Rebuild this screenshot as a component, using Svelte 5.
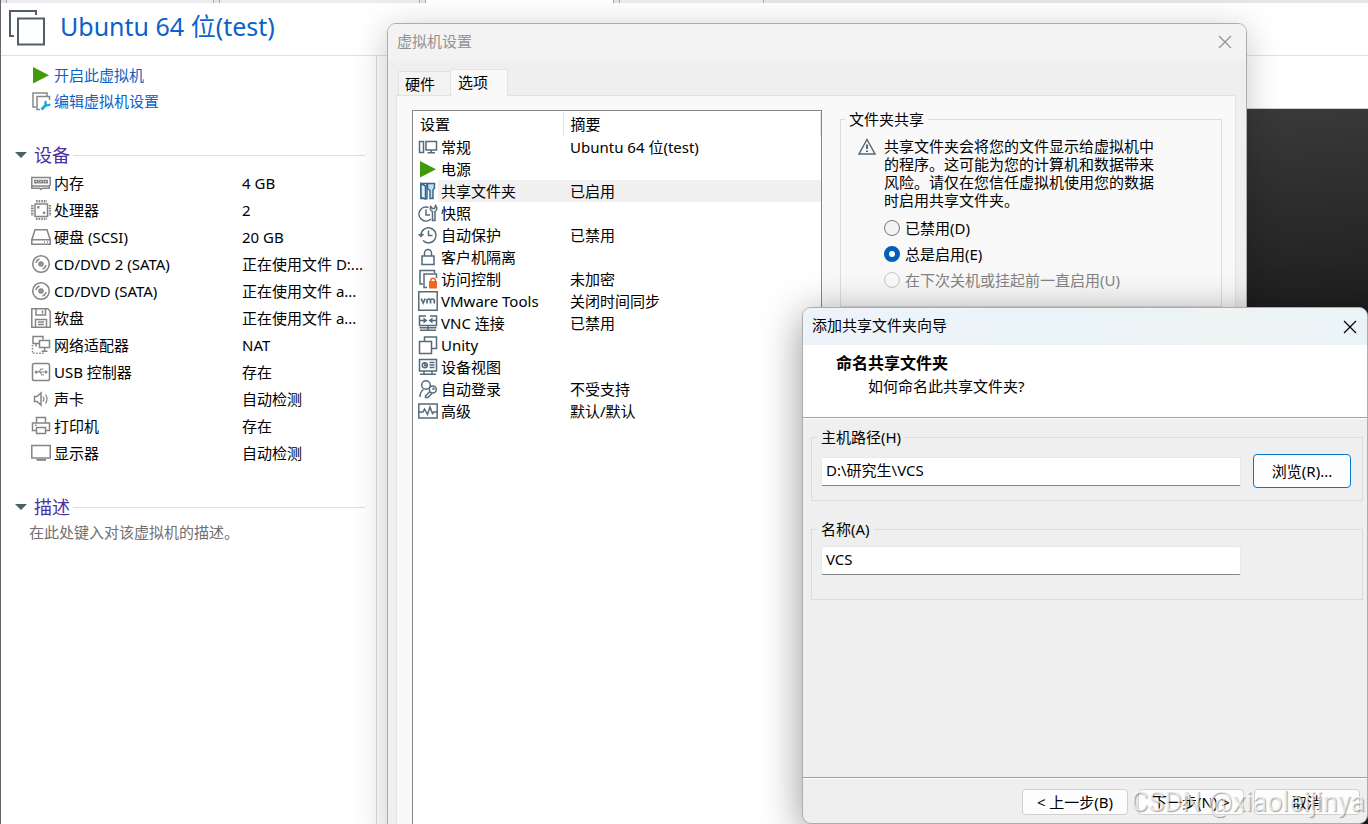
<script lang="ts">
  interface Row {
    icon: string;
    name: string;
    value: string;
  }

  const devices: Row[] = [
    { icon: "memory", name: "内存", value: "4 GB" },
    { icon: "cpu", name: "处理器", value: "2" },
    { icon: "disk", name: "硬盘 (SCSI)", value: "20 GB" },
    { icon: "cd", name: "CD/DVD 2 (SATA)", value: "正在使用文件 D:..." },
    { icon: "cd", name: "CD/DVD (SATA)", value: "正在使用文件 a..." },
    { icon: "floppy", name: "软盘", value: "正在使用文件 a..." },
    { icon: "network", name: "网络适配器", value: "NAT" },
    { icon: "usb", name: "USB 控制器", value: "存在" },
    { icon: "sound", name: "声卡", value: "自动检测" },
    { icon: "printer", name: "打印机", value: "存在" },
    { icon: "display", name: "显示器", value: "自动检测" },
  ];

  const settings: Row[] = [
    { icon: "general", name: "常规", value: "Ubuntu 64 位(test)" },
    { icon: "play", name: "电源", value: "" },
    { icon: "shared", name: "共享文件夹", value: "已启用" },
    { icon: "snapshot", name: "快照", value: "" },
    { icon: "history", name: "自动保护", value: "已禁用" },
    { icon: "lock", name: "客户机隔离", value: "" },
    { icon: "access", name: "访问控制", value: "未加密" },
    { icon: "vmtools", name: "VMware Tools", value: "关闭时间同步" },
    { icon: "vnc", name: "VNC 连接", value: "已禁用" },
    { icon: "unity", name: "Unity", value: "" },
    { icon: "view", name: "设备视图", value: "" },
    { icon: "login", name: "自动登录", value: "不受支持" },
    { icon: "advanced", name: "高级", value: "默认/默认" },
  ];

  const modes = [
    { id: "disabled", label: "已禁用(D)", off: false },
    { id: "always", label: "总是启用(E)", off: false },
    { id: "until", label: "在下次关机或挂起前一直启用(U)", off: true },
  ];

  // 20x20 icon bodies, stroked with the current colour
  const icons: Record<string, string> = {
    memory: `<path d="M.8 4.500h18.400v7.700l-1 .6v2.400h-7l-1.200 1.300-1.200-1.300H.8v-2.400z"/><path d="M1 13h18"/><path d="M3.700 7.500h3v2.300h-3zM8.500 7.500h3v2.300h-3zM13.300 7.500h3v2.300h-3z"/>`,
    cpu: `<path d="M4 4h12.500v12.500H4z"/><path stroke-width="2.600" stroke-dasharray="1.600 1" d="M5 1.300h11M5 19h11M1.300 5v11M19 5v11"/><circle cx="7.300" cy="7.300" r=".6"/><circle cx="13" cy="12.800" r=".6"/>`,
    disk: `<path d="M4 2.700h12l3.200 10v4.500H.8v-4.500zM1 12.700h18"/><path d="M13 15h1M16 15h1"/>`,
    cd: `<circle cx="10" cy="10" r="8.300"/><circle cx="10" cy="10" r="2"/><circle cx="10" cy="10" r=".4"/><path d="M5 9a5 5 0 0 1 3.500-4M15 11a5 5 0 0 1-3.500 4"/>`,
    floppy: `<path d="M.8.8h16l2.400 2.400v16H.8zM5 1v6h9.500V1M4.500 19v-7.500h11V19M11.500 2.500v3M7 14h6M7 16.500h6"/>`,
    network: `<path d="M8 8.500H2v-7h10v3M8.500 5.500h10v7h-10zM13.500 12.500V16M10.500 16.300h6M5 8.500v3"/><path stroke-dasharray="1.500 1.500" d="M1.500 10v8.300H13"/>`,
    usb: `<rect x="1.500" y="1.500" width="17" height="17" rx="1.800"/><path stroke-width="1.200" d="M5 10h9.500M8 10l2-3h2.500M9 10l2 3h2"/><path fill="currentColor" stroke="none" d="M14 8l3 2-3 2z"/><circle cx="5.200" cy="10" r=".8"/>`,
    sound: `<path d="M3.500 7.500h2.500l4-3.500v12L6 12.500H3.500z"/><path stroke-width="1.200" d="M12 7.500q1.800 2.500 0 5M14.500 5.500q3 4.500 0 9"/>`,
    printer: `<path d="M5.500 7V1.500h9V7M5 14.500H1.500V7h17v7.500H15M5.500 11.500h9v6h-9zM4 9.200h1.500"/>`,
    display: `<path d="M.8 2.500h18.400v12.600H.8z"/><path stroke-width="1.800" d="M5.500 16.900h9.500"/>`,
    edit: `<path d="M5 16H2V2h14v3M9 18.500H6V5.500h12.500V9"/><path stroke="#18a9d1" stroke-width="2.800" d="M10.500 18.500l5-5"/><path stroke="#18a9d1" stroke-width="2.200" d="M15 10q-1.500 3 .5 4t3.500-1"/>`,
    play: `<path stroke="none" fill="#3f9b0b" d="M2 2v16.500l16-8.300z"/>`,
    general: `<path d="M1.500 4.500h4v11h-4zM8 4.500h10.500v8.500H8zM13.200 13v2.500M9.500 15.700h7.500"/>`,
    shared: `<g stroke="#35678d"><path fill="#fff" d="M3 2.500h6v15H3z"/><path fill="#e5eff7" d="M3 2.500l4.500 2.500V18L3 16.500z"/><path fill="#c4dced" d="M9.500 2.500h7v4.500l-1.500 2v8.500h-3V9.500L9.500 7.500z"/></g>`,
    snapshot: `<path d="M10.500 4.500A7 7 0 1 0 13 16M8 6.500V12h4"/><path d="M14.500 17.500V8.500q-3-1.500-1.800-5l1.800 2h2l1-3q3 3.500-.5 6v9z"/>`,
    history: `<path d="M3 10a7.500 7.500 0 1 1 2 5.500M.8 9l2.200 2.500L5.500 9M10.500 5.500v5h4"/>`,
    lock: `<path d="M4 9h12v8.500H4zM6.500 9V6a3.500 3.500 0 0 1 7 0v3"/>`,
    access: `<path d="M5 15H2V1.500h14.500V4M9 18.500H6V5h12.500v4"/><path stroke="#f26522" d="M12.800 13v-1.500a2.200 2.200 0 0 1 4.500 0V13"/><path fill="#f26522" stroke="none" d="M11 12h8v7.500h-8z"/>`,
    vmtools: `<path d="M.8.8h18.400v18.400H.8z"/><path stroke-width="1.700" d="M3.200 7.500l2 4.500 2-4.500M9 12.500V8M9 9q2-2 3.500 0v3.500M12.500 9q2-2 3.800 0v3.500"/>`,
    vnc: `<path d="M8 3H1.500v9.500h17V3H12M10 12.500V17M2 17.200h16M1.500 14.800h17M2 7.500h5M18 7.500h-5"/><path fill="currentColor" stroke="none" d="M5.500 4.500l4 3-4 3zM14.500 4.500l-4 3 4 3z"/>`,
    unity: `<path d="M1.500 6.500h12v12h-12zM6.500 6V2h12v11.500H14"/>`,
    view: `<path d="M1.500 2.500h17v11.500h-17zM6 14v3M14 14v3M2 17.200h16"/><circle cx="6.800" cy="8.200" r="2.500"/><path d="M6.800 5v3.500h2.500M11.500 5.500h5M11.500 8h5M11.500 10.500h5"/>`,
    login: `<circle cx="8" cy="6" r="4.300"/><path d="M2 18q0-5 3.500-7.500"/><circle cx="14.800" cy="10.500" r="3.500"/><path d="M12 12.500L7.500 17v1.500h2.500l4-4.200"/><circle cx="15.500" cy="9.800" r=".5"/>`,
    advanced: `<path d="M.8 3h18.400v14H.8z"/><path d="M1 11h4l1.500-3 3 5.500L12 6l2.500 6.500 1.200-1.500H19"/>`,
    warning: `<path d="M10 2.500L18 17H2z"/><path stroke-width="2" d="M10 7.500v4.500M10 13.500v1.500"/>`,
  };

  let selected = $state("共享文件夹");
  let mode = $state("always");
  let hostPath = $state("D:\\研究生\\VCS");
  let shareName = $state("VCS");
</script>

{#snippet icon(name: string)}
  <svg class="icon" viewBox="0 0 20 20" aria-hidden="true">{@html icons[name]}</svg>
{/snippet}

{#snippet cross()}
  <svg class="cross" viewBox="0 0 12 12" aria-hidden="true"><path d="M0 0l12 12M12 0L0 12" /></svg>
{/snippet}

<div class="desktop">
  <div class="doc-tabs">
    <span class="sliver"></span>
    <span class="doc-tab first"></span>
    <span class="sliver"></span>
    <span class="doc-tab second"></span>
    <span class="sliver"></span>
    <span class="doc-tab current"></span>
    <span class="sliver"></span>
    <span class="doc-tab fourth"></span>
    <span class="doc-tab rest"></span>
  </div>

  <header class="vm-header">
    <svg class="vm-logo" viewBox="0 0 38 38" aria-hidden="true">
      <path d="M6 27H2V2h26v4M10 9.500h26v26H10z" />
    </svg>
    <h1>Ubuntu 64 位(test)</h1>
  </header>

  <div class="vm-body">
    <aside class="summary">
      <a class="action" href="#start">{@render icon("play")}开启此虚拟机</a>
      <a class="action" href="#edit">{@render icon("edit")}编辑虚拟机设置</a>

      <h2 class="section">设备</h2>
      <table class="devices">
        <tbody>
          {#each devices as device}
            <tr>
              <td class="device-name"><span>{@render icon(device.icon)}{device.name}</span></td>
              <td>{device.value}</td>
            </tr>
          {/each}
        </tbody>
      </table>

      <h2 class="section">描述</h2>
      <p class="description">在此处键入对该虚拟机的描述。</p>
    </aside>
    <main class="preview">
      <div class="console"></div>
    </main>
  </div>

  <section class="window settings-window" aria-label="虚拟机设置">
    <div class="titlebar inactive">
      <span>虚拟机设置</span>
      <button class="close" aria-label="关闭">{@render cross()}</button>
    </div>
    <div class="settings-body">
      <div class="tabs" role="tablist">
        <button class="tab" role="tab" aria-selected="false">硬件</button>
        <button class="tab active" role="tab" aria-selected="true">选项</button>
      </div>
      <div class="panel">
        <div class="list">
          <table>
            <colgroup>
              <col class="col-icon" />
              <col class="col-name" />
              <col />
            </colgroup>
            <thead>
              <tr>
                <th colspan="2">设置</th>
                <th>摘要</th>
              </tr>
            </thead>
            <tbody>
              {#each settings as item}
                <tr class:selected={item.name === selected} onclick={() => (selected = item.name)}>
                  <td class="icon-cell">{@render icon(item.icon)}</td>
                  <td class="name-cell">{item.name}</td>
                  <td class="value-cell">{item.value}</td>
                </tr>
              {/each}
            </tbody>
          </table>
        </div>
        <fieldset class="sharing">
          <legend>文件夹共享</legend>
          <div class="notice">
            {@render icon("warning")}
            <p>共享文件夹会将您的文件显示给虚拟机中的程序。这可能为您的计算机和数据带来风险。请仅在您信任虚拟机使用您的数据时启用共享文件夹。</p>
          </div>
          <div class="modes">
            {#each modes as m}
              <label class:off={m.off}>
                <input type="radio" name="mode" value={m.id} disabled={m.off} bind:group={mode} />
                {m.label}
              </label>
            {/each}
          </div>
        </fieldset>
      </div>
    </div>
  </section>

  <section class="window wizard" aria-label="添加共享文件夹向导">
    <div class="titlebar">
      <span>添加共享文件夹向导</span>
      <button class="close" aria-label="关闭">{@render cross()}</button>
    </div>
    <div class="wizard-head">
      <h2>命名共享文件夹</h2>
      <p>如何命名此共享文件夹?</p>
    </div>
    <div class="wizard-body">
      <fieldset class="group">
        <legend><label for="host-path">主机路径(H)</label></legend>
        <div class="field-row">
          <input id="host-path" type="text" bind:value={hostPath} />
          <button class="browse">浏览(R)...</button>
        </div>
      </fieldset>
      <fieldset class="group name-group">
        <legend><label for="share-name">名称(A)</label></legend>
        <div class="field-row">
          <input id="share-name" type="text" bind:value={shareName} />
        </div>
      </fieldset>
    </div>
    <div class="wizard-foot">
      <button>&lt; 上一步(B)</button>
      <button>下一步(N) &gt;</button>
      <button>取消</button>
    </div>
  </section>

  <div class="watermark">CSDN @xiaoleijinya</div>
</div>

<style>
  :global(body) {
    margin: 0;
  }

  .desktop {
    position: relative;
    display: flex;
    flex-direction: column;
    box-sizing: border-box;
    height: 100vh;
    overflow: hidden;
    border-left: 1px solid #666;
    background: #fff;
    color: #000;
    font: 15px/20px "Noto Sans", "Noto Sans CJK SC", sans-serif;
  }

  h1,
  h2,
  p {
    margin: 0;
    font-weight: 400;
  }

  button,
  input {
    font: inherit;
    color: inherit;
  }

  .icon {
    flex: none;
    width: 20px;
    height: 20px;
    fill: none;
    stroke: currentColor;
    stroke-width: 1.5;
  }

  .cross {
    width: 12px;
    height: 12px;
    overflow: visible;
    stroke: currentColor;
    stroke-width: 1.2;
  }

  .doc-tabs {
    display: flex;
    height: 3px;
    background: #e3e4e6;
  }

  .sliver {
    width: 5px;
    border-right: 1px solid #aaa;
  }

  .doc-tab {
    box-sizing: border-box;
    border-right: 1px solid #aaa;
    background: #ececee;
  }

  .first {
    width: 207px;
  }

  .second {
    width: 200px;
  }

  .current {
    width: 188px;
    background: #fff;
  }

  .fourth {
    width: 144px;
  }

  .rest {
    flex: 1;
    border: 0;
    background: #e5e6e8;
  }

  .vm-header {
    display: flex;
    align-items: center;
    gap: 14px;
    height: 50px;
    padding: 0 0 2px 7px;
    border-bottom: 1px solid #e0e0e0;
  }

  .vm-logo {
    width: 38px;
    height: 38px;
    fill: none;
    stroke: #4d5f6b;
    stroke-width: 2;
  }

  h1 {
    padding-bottom: 4px;
    color: #0b62c8;
    font-size: 25px;
    line-height: 34px;
  }

  .vm-body {
    display: flex;
    flex: 1;
  }

  .summary {
    box-sizing: border-box;
    width: 376px;
    padding: 6px 11px 0 14px;
    border-right: 1px solid #ddd;
  }

  .action {
    display: flex;
    align-items: center;
    gap: 3px;
    height: 26px;
    padding-left: 16px;
    color: #0b62c8;
    text-decoration: none;
  }

  .action .icon {
    color: #888;
  }

  .section {
    display: flex;
    align-items: center;
    gap: 3px;
    height: 28px;
    margin-top: 27px;
    color: #4a2fa0;
    font-size: 18px;
  }

  .section::before {
    content: "";
    margin-right: 4px;
    border: 6px solid transparent;
    border-top-color: #4d5f6b;
    border-bottom: 0;
  }

  .section::after {
    content: "";
    flex: 1;
    height: 1px;
    background: #ddd;
  }

  .devices {
    width: 100%;
    border-collapse: collapse;
    table-layout: fixed;
  }

  .devices td {
    height: 27px;
    padding: 0;
    white-space: nowrap;
  }

  .devices .device-name {
    width: 211px;
    padding-left: 16px;
  }

  .device-name span {
    display: flex;
    align-items: center;
    gap: 3px;
  }

  .device-name .icon {
    stroke: #858585;
    color: #858585;
  }

  .description {
    padding-left: 14px;
    color: #707070;
    line-height: 22px;
  }

  .preview {
    display: flex;
    flex: 1;
    padding-top: 52px;
  }

  .console {
    flex: 1;
    margin-left: 200px;
    border-top: 1px solid #ccd0ce;
    background: linear-gradient(175deg, #3c3c3c 40px, #1e1e1e 270px);
  }

  .window {
    position: absolute;
    display: flex;
    flex-direction: column;
    box-sizing: border-box;
    overflow: hidden;
    border: 1px solid #adadad;
    border-radius: 9px;
    background: #efefef;
  }

  .settings-window {
    top: 23px;
    right: 121px;
    bottom: -20px;
    left: 386px;
    box-shadow: 0 6px 34px rgba(0, 0, 0, 0.22);
  }

  .wizard {
    top: 307px;
    right: 0;
    bottom: 0;
    left: 801px;
    box-shadow: 0 8px 40px rgba(0, 0, 0, 0.42);
  }

  .titlebar {
    display: flex;
    flex: none;
    align-items: center;
    justify-content: space-between;
    height: 37px;
    padding: 0 11px 0 9px;
    background: linear-gradient(90deg, #eef3fa, #eaf3f8 45%, #eef3f3 75%, #eaf4f8);
  }

  .titlebar span {
    padding-bottom: 3px;
  }

  .titlebar.inactive {
    height: 36px;
    padding-right: 15px;
    background: #f3f3f3;
    color: #919191;
  }

  .close {
    display: flex;
    padding: 0;
    border: 0;
    background: none;
  }

  .settings-body {
    display: flex;
    flex: 1;
    flex-direction: column;
    padding: 9px 10px 0 8px;
  }

  .tabs {
    display: flex;
    align-items: flex-end;
    padding-left: 2px;
  }

  .tab {
    width: 52px;
    height: 24px;
    padding: 0 0 0 6px;
    border: 1px solid #e2e2e2;
    border-width: 1px 0 0 1px;
    background: #f3f3f3;
    line-height: 20px;
    text-align: left;
  }

  .tab.active {
    z-index: 1;
    width: 58px;
    height: 27px;
    margin-bottom: -1px;
    padding: 0 0 2px 7px;
    border-right-width: 1px;
    background: #f9f9f9;
  }

  .panel {
    display: flex;
    flex: 1;
    align-items: flex-start;
    gap: 18px;
    padding: 14px 13px 0 15px;
    border: 1px solid #e2e2e2;
    background: #f9f9f9;
  }

  .list {
    box-sizing: border-box;
    align-self: stretch;
    width: 410px;
    padding-top: 1px;
    border: 1px solid #828790;
    background: #fff;
  }

  .list table {
    width: 100%;
    border-collapse: collapse;
    table-layout: fixed;
  }

  .col-icon {
    width: 25px;
  }

  .col-name {
    width: 125px;
  }

  .list th {
    height: 24px;
    padding: 0 0 0 7px;
    border-right: 1px solid #e5e5e5;
    font-weight: 400;
    text-align: left;
  }

  .list td {
    height: 22px;
    padding: 0;
    line-height: 20px;
    white-space: nowrap;
  }

  .list .icon-cell {
    padding-left: 5px;
    color: #566b79;
  }

  .icon-cell .icon {
    display: block;
  }

  .list .name-cell {
    padding-left: 3px;
  }

  .list .value-cell {
    padding-left: 7px;
  }

  .selected .name-cell,
  .selected .value-cell {
    background: #f0f0f0;
  }

  fieldset {
    min-width: 0;
    margin: 0;
    border: 1px solid #dcdcdc;
  }

  legend {
    margin-left: -4px;
    padding: 0 4px;
    line-height: 18px;
  }

  .sharing {
    flex: 1;
    padding: 9px 16px 13px;
  }

  .sharing legend {
    margin-left: -12px;
  }

  .notice {
    display: flex;
    gap: 7px;
    color: #566b79;
  }

  .notice p {
    width: 272px;
    color: #000;
    line-height: 18px;
  }

  .modes {
    margin: 6px 0 0 27px;
  }

  .modes label {
    display: flex;
    align-items: center;
    gap: 5px;
    height: 26px;
    white-space: nowrap;
  }

  .modes .off {
    color: #838383;
  }

  .modes input {
    appearance: none;
    box-sizing: border-box;
    width: 16px;
    height: 16px;
    margin: 0;
    border: 1px solid #777;
    border-radius: 50%;
    background: #f3f3f3;
  }

  .modes input:checked {
    border: 5px solid #005fb8;
    background: #fff;
  }

  .modes input:disabled {
    border-color: #c6c6c6;
    background: #fafafa;
  }

  .wizard-head {
    padding: 7px 33px 19px;
    border-bottom: 1px solid #a0a0a0;
    background: #fff;
    line-height: 23px;
  }

  .wizard-head h2 {
    font-size: 16px;
    font-weight: 700;
  }

  .wizard-head p {
    padding-left: 32px;
  }

  .wizard-body {
    flex: 1;
    padding: 9px 4px 0 8px;
    border-top: 1px solid #fff;
  }

  .group {
    padding: 8px 11px 12px 9px;
  }

  .name-group {
    margin-top: 19px;
    padding-right: 121px;
    padding-bottom: 24px;
  }

  .field-row {
    display: flex;
    align-items: center;
    gap: 12px;
  }

  .field-row input {
    box-sizing: border-box;
    flex: 1;
    min-width: 0;
    height: 29px;
    padding: 0 4px 4px;
    border: 1px solid #e8e8e8;
    border-bottom-color: #858585;
    border-radius: 2px;
    outline: 0;
    background: #fff;
  }

  .browse {
    width: 98px;
    height: 34px;
    padding: 0;
    border: 1px solid #0078d4;
    border-radius: 4px;
    background: #fdfdfd;
  }

  .wizard-foot {
    display: flex;
    justify-content: flex-end;
    gap: 10px;
    padding: 11px 7px 8px;
    border-top: 1px solid #a0a0a0;
    box-shadow: inset 0 1px #fff;
  }

  .wizard-foot button {
    width: 106px;
    height: 26px;
    padding: 0;
    border: 1px solid #d0d0d0;
    border-radius: 4px;
    background: #fdfdfd;
    white-space: nowrap;
  }

  .watermark {
    position: absolute;
    right: 3px;
    bottom: 6px;
    color: rgba(255, 255, 255, 0.7);
    font: 27px/32px Roboto, sans-serif;
    text-shadow: 1px 1px 1px rgba(0, 0, 0, 0.35);
    pointer-events: none;
  }
</style>
